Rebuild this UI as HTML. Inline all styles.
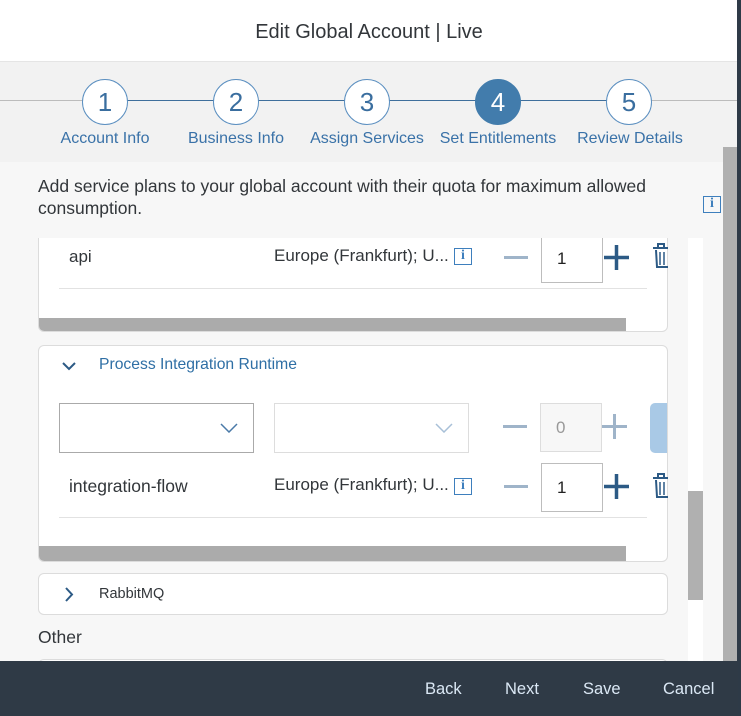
<!DOCTYPE html>
<html><head><style>
*{box-sizing:border-box;margin:0;padding:0}
body{width:741px;height:716px;overflow:hidden;background:#f7f7f7;font-family:"Liberation Sans",sans-serif;position:relative}
.abs{position:absolute}
.hdr{left:0;top:0;width:738px;height:62px;background:#fff;border-bottom:1px solid #e5e5e5;text-align:center;font-size:20px;color:#32363a;line-height:64px}
.step{top:62px;left:0;width:738px;height:100px;background:#f2f2f2}
.circ{width:46px;height:46px;border-radius:50%;border:1px solid #5b8fc0;background:#fff;color:#3a6e9f;font-size:26px;text-align:center;line-height:44px;top:79px}
.lbl{top:130px;color:#3a72a8;font-size:16px;width:140px;text-align:center}
.card{background:#fff;border:1px solid #dcdcdc;border-radius:6px;left:38px;width:630px}
.t{font-size:17px;color:#32363a}
.minus{width:24px;height:3px;background:#9fb4c9}
.box{width:62px;height:49px;border:1px solid #bdbdbd;background:#fff;font-size:17px;line-height:47px;padding-left:15px;color:#222}
.info{width:18px;height:17px;border:1.5px solid #3e7fbd;color:#3e7fbd;font:bold 14px "Liberation Serif",serif;text-align:center;line-height:14px}
</style></head><body>
<div class="abs hdr">Edit Global Account | Live</div>
<div class="abs step"></div>
<div class="abs" style="left:0;top:100px;width:738px;height:1px;background:#bcbcbc"></div>
<div class="abs" style="left:105px;top:100px;width:525px;height:1px;background:#3f6f9c"></div>
<div class="abs circ" style="left:82px">1</div>
<div class="abs circ" style="left:213px">2</div>
<div class="abs circ" style="left:344px">3</div>
<div class="abs circ" style="left:475px;background:#427cac;border-color:#427cac;color:#fff">4</div>
<div class="abs circ" style="left:606px">5</div>
<div class="abs lbl" style="left:35px">Account Info</div>
<div class="abs lbl" style="left:166px">Business Info</div>
<div class="abs lbl" style="left:297px">Assign Services</div>
<div class="abs lbl" style="left:428px">Set Entitlements</div>
<div class="abs lbl" style="left:560px">Review Details</div>
<div class="abs" style="left:38px;top:175px;line-height:22px;width:660px;font-size:17.5px;color:#32363a">Add service plans to your global account with their quota for maximum allowed consumption.</div>
<div class="abs info" style="left:703px;top:196px">i</div>
<div class="abs" style="left:723px;top:147px;width:14px;height:514px;background:#b0b0b0"></div>
<div class="abs" style="left:737px;top:0;width:4px;height:716px;background:#2e3a47"></div>
<div class="abs" style="left:0;top:238px;width:703px;height:423px;overflow:hidden">
 <div class="abs card" style="top:-40px;height:134px;overflow:hidden">
  <div class="abs" style="left:20px;top:89px;width:588px;height:1px;background:#e2e2e2"></div>
  <div class="abs" style="left:0;top:119px;width:587px;height:14px;background:#ababab"></div>
 </div>
 <div class="abs t" style="left:69px;top:9px">api</div>
 <div class="abs t" style="left:274px;top:8px">Europe (Frankfurt); U...</div>
 <div class="abs info" style="left:454px;top:10px">i</div>
 <div class="abs minus" style="left:504px;top:18px"></div>
 <div class="abs box" style="left:541px;top:-4px">1</div>
 <svg class="abs" style="left:603px;top:6px" width="27" height="27"><path d="M13.5 1v25M1 13.5h25" stroke="#2c5a85" stroke-width="3.5"/></svg>
 <div class="abs card" style="top:107px;height:217px;overflow:hidden">
  <svg class="abs" style="left:23px;top:15px" width="14" height="10"><path d="M1 2l6 6 6-6" stroke="#2c5a85" stroke-width="2" fill="none"/></svg>
  <div class="abs" style="left:60px;top:10px;color:#2f6fa5;font-size:15.7px">Process Integration Runtime</div>
  <div class="abs" style="left:20px;top:57px;width:195px;height:50px;border:1px solid #aaa"></div>
  <svg class="abs" style="left:181px;top:77px" width="18" height="10"><path d="M1 1l8 8 8-8" stroke="#4a7aa8" stroke-width="1.5" fill="none"/></svg>
  <div class="abs" style="left:235px;top:57px;width:195px;height:50px;border:1px solid #ddd"></div>
  <svg class="abs" style="left:396px;top:77px" width="18" height="10"><path d="M1 1l8 8 8-8" stroke="#a8c0d8" stroke-width="1.5" fill="none"/></svg>
  <div class="abs minus" style="left:464px;top:79px"></div>
  <div class="abs box" style="left:501px;top:57px;background:#f7f7f7;border-color:#ddd;color:#999">0</div>
  <svg class="abs" style="left:562px;top:67px" width="27" height="27"><path d="M13.5 1v25M1 13.5h25" stroke="#9fb4c9" stroke-width="3"/></svg>
  <div class="abs" style="left:611px;top:57px;width:30px;height:50px;background:#a9c9e6;border-radius:5px"></div>
  <div class="abs" style="left:20px;top:171px;width:588px;height:1px;background:#e2e2e2"></div>
  <div class="abs" style="left:0;top:200px;width:587px;height:15px;background:#ababab"></div>
 </div>
 <div class="abs t" style="left:69px;top:238px;font-size:17.5px">integration-flow</div>
 <div class="abs t" style="left:274px;top:237px">Europe (Frankfurt); U...</div>
 <div class="abs info" style="left:454px;top:240px">i</div>
 <div class="abs minus" style="left:504px;top:247px"></div>
 <div class="abs box" style="left:541px;top:225px">1</div>
 <svg class="abs" style="left:603px;top:235px" width="27" height="27"><path d="M13.5 1v25M1 13.5h25" stroke="#2c5a85" stroke-width="3.5"/></svg>
 <div class="abs" style="left:668px;top:0;width:20px;height:423px;background:#f7f7f7"></div>
 <svg class="abs" style="left:652px;top:2px" width="16" height="30"><path d="M1 8h15M6 8V4h6v4M4 10l1 17h11" stroke="#2c5a85" stroke-width="2" fill="none"/><path d="M8 12v13M12 12v13" stroke="#2c5a85" stroke-width="1.5"/></svg>
 <svg class="abs" style="left:652px;top:232px" width="16" height="30"><path d="M1 8h15M6 8V4h6v4M4 10l1 17h11" stroke="#2c5a85" stroke-width="2" fill="none"/><path d="M8 12v13M12 12v13" stroke="#2c5a85" stroke-width="1.5"/></svg>
 <div class="abs card" style="top:335px;height:42px">
  <svg class="abs" style="left:25px;top:13px" width="10" height="15"><path d="M2 1l6 6.5-6 6.5" stroke="#2c5a85" stroke-width="2" fill="none"/></svg>
  <div class="abs" style="left:60px;top:12px;color:#32363a;font-size:14.5px">RabbitMQ</div>
 </div>
 <div class="abs t" style="left:38px;top:389px;font-size:17.5px">Other</div>
 <div class="abs card" style="top:421px;height:40px"></div>
 <div class="abs" style="left:688px;top:0;width:15px;height:423px;background:#fff"></div>
 <div class="abs" style="left:688px;top:253px;width:15px;height:109px;background:#b0b0b0"></div>
</div>
<div class="abs" style="left:0;top:661px;width:738px;height:55px;background:#2f3a46"></div>
<div class="abs" style="top:680px;left:425px;color:#dbe8f5;font-size:16.5px">Back</div>
<div class="abs" style="top:680px;left:505px;color:#dbe8f5;font-size:16.5px">Next</div>
<div class="abs" style="top:680px;left:583px;color:#dbe8f5;font-size:16.5px">Save</div>
<div class="abs" style="top:680px;left:663px;color:#dbe8f5;font-size:16.5px">Cancel</div>
</body></html>
